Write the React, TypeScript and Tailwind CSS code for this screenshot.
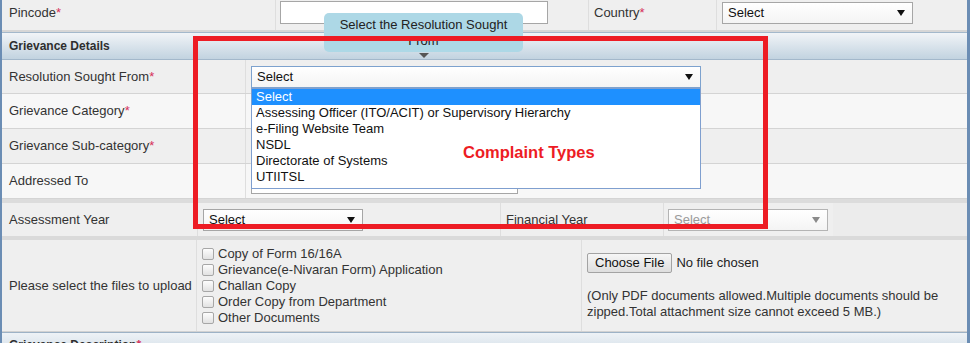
import React from "react";

const Star = () => <span className="text-[#d6305a]">*</span>;

function Arrow({ disabled }: { disabled?: boolean }) {
  return (
    <svg width="8" height="6" viewBox="0 0 8 6" className="shrink-0">
      <path d="M0 0 H8 L4 6 Z" fill={disabled ? "#8a8a8a" : "#111"} />
    </svg>
  );
}

function FakeSelect({
  width,
  focused,
  disabled,
}: {
  width: string;
  focused?: boolean;
  disabled?: boolean;
}) {
  return (
    <div
      className={`${width} h-[22px] flex items-center justify-between pl-[5px] pr-[7px] bg-gradient-to-b from-white to-[#f4f4f4] border ${
        focused ? "border-[#7da2ce]" : disabled ? "border-[#b4b4b4]" : "border-[#a6a6a6]"
      } ${disabled ? "text-[#9a9a9a]" : "text-[#111]"}`}
    >
      <span>Select</span>
      <Arrow disabled={disabled} />
    </div>
  );
}

function Checkbox({ label }: { label: string }) {
  return (
    <div className="flex items-center h-[16px]">
      <span className="w-[12px] h-[12px] rounded-[2px] border border-[#a7a7a7] bg-gradient-to-b from-[#fdfdfd] to-[#e2e2e2] mr-[4px]" />
      <span>{label}</span>
    </div>
  );
}

function FieldRow({
  label,
  bg,
  height,
  children,
}: {
  label: React.ReactNode;
  bg: string;
  height: string;
  children?: React.ReactNode;
}) {
  return (
    <div className={`flex ${height} border-b border-[#d4d4d4] ${bg}`}>
      <div className="w-[244px] flex items-center pl-[7px] border-r border-[#dedede]">{label}</div>
      <div className="flex-1 flex items-center pl-[5px]">{children}</div>
    </div>
  );
}

export default function App() {
  return (
    <div className="relative w-[974px] h-[343px] overflow-hidden bg-white font-['Liberation_Sans',Arial,sans-serif] text-[13px] leading-[16px] text-[#333]">
      <div className="w-[970px] border-l-2 border-r-[3px] border-[#6b8db4] bg-[#efefef]">
        {/* Pincode / Country */}
        <div className="flex h-[30px] bg-[#efefef]">
          <div className="w-[274px] pl-[7px] pt-[5px] border-r border-[#dedede]">
            Pincode<Star />
          </div>
          <div className="w-[313px] pl-[4px] pt-[1px] border-r border-[#dedede]">
            <div className="w-[268px] h-[23px] bg-white border border-[#a6a6a6]" />
          </div>
          <div className="w-[128px] pl-[5px] pt-[5px] border-r border-[#dedede]">
            Country<Star />
          </div>
          <div className="flex-1 pl-[5px] pt-[2px]">
            <FakeSelect width="w-[191px]" />
          </div>
        </div>
        <div className="h-[2px] bg-[#d6d6d6]" />

        {/* Section header */}
        <div className="h-[28px] border-y border-[#a3b8cb] bg-gradient-to-b from-[#f1f4f7] to-[#c2d3e0] pl-[7px] flex items-center font-bold text-[12px] text-[#2e2e2e]">
          Grievance Details
        </div>

        <FieldRow label={<>Resolution Sought From<Star /></>} bg="bg-[#efefef]" height="h-[34px]">
          <FakeSelect width="w-[450px]" focused />
        </FieldRow>
        <FieldRow label={<>Grievance Category<Star /></>} bg="bg-[#f7f7f7]" height="h-[35px]" />
        <FieldRow label={<>Grievance Sub-category<Star /></>} bg="bg-[#efefef]" height="h-[35px]" />
        <FieldRow label="Addressed To" bg="bg-[#f7f7f7]" height="h-[35px]">
          <div className="w-[267px] h-[22px] bg-white border border-[#a6a6a6] mt-[3px]" />
        </FieldRow>
        <div className="h-[4px] bg-[#dcdcdc]" />

        {/* Assessment / Financial year */}
        <div className="flex h-[37px] border-b-4 border-[#dadada] bg-[#ececec]">
          <div className="w-[196px] flex items-center pl-[7px] border-r border-[#dedede] bg-[#efefef]">
            Assessment Year
          </div>
          <div className="w-[303px] flex items-center pl-[5px] border-r border-[#dedede] bg-[#efefef]">
            <FakeSelect width="w-[160px]" />
          </div>
          <div className="w-[163px] flex items-center pl-[5px] border-r border-[#dedede] bg-[#efefef]">
            Financial Year
          </div>
          <div className="w-[169px] flex items-center pl-[4px] bg-[#efefef]">
            <FakeSelect width="w-[160px]" disabled />
          </div>
        </div>

        {/* Files */}
        <div className="flex h-[91px] bg-[#efefef]">
          <div className="w-[195px] flex items-center pl-[7px] border-r border-[#dedede]">
            Please select the files to upload
          </div>
          <div className="w-[385px] flex flex-col justify-center pl-[5px] border-r border-[#dedede]">
            <Checkbox label="Copy of Form 16/16A" />
            <Checkbox label="Grievance(e-Nivaran Form) Application" />
            <Checkbox label="Challan Copy" />
            <Checkbox label="Order Copy from Department" />
            <Checkbox label="Other Documents" />
          </div>
          <div className="flex-1 pl-[5px] pt-[13px]">
            <div className="flex items-center">
              <div className="h-[20px] px-[7px] flex items-center border border-[#a3a3a3] rounded-[2px] bg-gradient-to-b from-[#f6f6f6] to-[#dedede] text-[#111]">
                Choose File
              </div>
              <span className="ml-[4px] text-[#222]">No file chosen</span>
            </div>
            <p className="mt-[15px] pr-[20px]">
              (Only PDF documents allowed.Multiple documents should be zipped.Total attachment size cannot exceed 5 MB.)
            </p>
          </div>
        </div>
        <div className="h-[1px] bg-[#d2d2d2]" />
        <div className="h-[20px] border-t border-[#9db2c6] bg-gradient-to-b from-[#eef2f6] to-[#d3dfe8] pl-[7px] pt-[4px] font-bold text-[12px] text-[#2e2e2e]">
          Grievance Description<Star />
        </div>
      </div>

      {/* Open dropdown list */}
      <div className="absolute left-[251px] top-[88px] w-[450px] h-[101px] bg-white border border-[#7f9fcf] text-[#111]">
        <div className="h-[16px] pl-[4px] bg-[#1e90ff] text-white">Select</div>
        <div className="h-[16px] pl-[4px]">Assessing Officer (ITO/ACIT) or Supervisory Hierarchy</div>
        <div className="h-[16px] pl-[4px]">e-Filing Website Team</div>
        <div className="h-[16px] pl-[4px]">NSDL</div>
        <div className="h-[16px] pl-[4px]">Directorate of Systems</div>
        <div className="h-[16px] pl-[4px]">UTIITSL</div>
      </div>

      {/* Tooltip */}
      <div className="absolute left-[324px] top-[13px] w-[199px] h-[39px] rounded-[5px] bg-[#add8e6] px-[8px] pt-[4px] text-center text-[#222]">
        Select the Resolution Sought From
      </div>
      <svg className="absolute left-[419px] top-[53px]" width="10" height="5" viewBox="0 0 10 5">
        <path d="M0 0 H10 L5 5 Z" fill="#555" />
      </svg>

      {/* Annotation */}
      <div className="absolute left-[193px] top-[36px] w-[575px] h-[193px] border-[5px] border-[#ed1c24]" />
      <div className="absolute left-[463px] top-[143px] font-bold text-[16.5px] leading-[18px] text-[#ed1c24]">
        Complaint Types
      </div>
    </div>
  );
}
